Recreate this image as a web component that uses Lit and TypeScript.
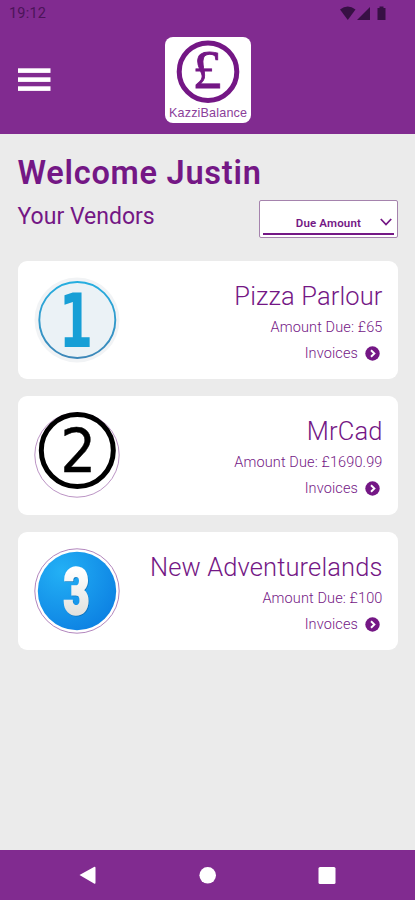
import { LitElement, html, svg, css } from "lit";
import { customElement, property } from "lit/decorators.js";

@customElement("vendor-badge")
class VendorBadge extends LitElement {
  @property({ type: Number }) rank = 1;
  static styles = css`
    :host { display: block; width: 86px; height: 86px; }
    svg { display: block; }
    .slab { font: 700 74px "DejaVu Sans", sans-serif; }
    .plain { font: 400 60px "DejaVu Sans", sans-serif; }
    .heavy { font: 900 64px Roboto, sans-serif; }
  `;
  private art() {
    if (this.rank === 1) {
      return svg`
        <defs><linearGradient id="b" x1="0" y1="0" x2="0" y2="1">
          <stop offset="0" stop-color="#25aee0"/><stop offset="1" stop-color="#3d87b8"/></linearGradient></defs>
        <circle cx="43" cy="43" r="42.5" fill="#f1f3f5"/>
        <circle cx="43.3" cy="43" r="38" fill="#ebf2f6" stroke="url(#b)" stroke-width="1.9"/>
        <text class="slab" x="42" y="69.5" text-anchor="middle" textLength="34" lengthAdjust="spacingAndGlyphs" fill="#179fd6">1</text>`;
    }
    if (this.rank === 2) {
      return svg`
        <circle cx="43" cy="43" r="42.2" fill="#fff" stroke="#a978b5" stroke-width="0.8"/>
        <circle cx="43.3" cy="38.5" r="36" fill="#fff" stroke="#000" stroke-width="5"/>
        <text class="plain" x="44.3" y="60.3" text-anchor="middle" textLength="36" lengthAdjust="spacingAndGlyphs" fill="#000" stroke="#000" stroke-width="0.4">2</text>`;
    }
    return svg`
      <defs>
        <radialGradient id="b" cx="0.3" cy="0.25" r="0.85">
          <stop offset="0" stop-color="#23b0f5"/><stop offset="1" stop-color="#0c80e2"/></radialGradient>
        <linearGradient id="n" x1="0" y1="0" x2="0" y2="1">
          <stop offset="0.2" stop-color="#fff"/><stop offset="0.9" stop-color="#dcdcd8"/></linearGradient>
      </defs>
      <circle cx="43" cy="43" r="42.2" fill="#fff" stroke="#a978b5" stroke-width="0.9"/>
      <circle cx="43" cy="43" r="39.2" fill="url(#b)"/>
      <text class="heavy" x="43.2" y="67" text-anchor="middle" textLength="26" lengthAdjust="spacingAndGlyphs" fill="#0868ad" stroke="#0868ad" stroke-width="2" opacity="0.7">3</text>
      <text class="heavy" x="42.4" y="66" text-anchor="middle" textLength="26" lengthAdjust="spacingAndGlyphs" fill="url(#n)" stroke="url(#n)" stroke-width="2.4">3</text>`;
  }
  render() {
    return html`<svg width="86" height="86" viewBox="0 0 86 86">${this.art()}</svg>`;
  }
}

@customElement("vendor-card")
class VendorCard extends LitElement {
  @property({ type: Number }) rank = 1;
  @property() name = "";
  @property() due = "";
  static styles = css`
    :host { display: flex; justify-content: space-between; box-sizing: border-box; height: 118.5px;
      padding: 16px 15.5px 0 16px; background: #fff; border-radius: 9px; color: #741785; }
    .info { display: flex; flex-direction: column; align-items: flex-end; white-space: nowrap; }
    .name { font-size: 25.5px; line-height: 30px; margin-top: 4px; letter-spacing: 0.12px; font-weight: 300; }
    .due { font-size: 14.5px; line-height: 18px; margin-top: 8px; font-weight: 300; letter-spacing: 0.12px; }
    .link { display: flex; align-items: center; gap: 7px; margin: 8px 2.5px 0 0; font-size: 14.5px; line-height: 18px; font-weight: 300; letter-spacing: 0.12px; }
    .link svg { margin-top: -1px; }
  `;
  render() {
    return html`
      <vendor-badge .rank=${this.rank}></vendor-badge>
      <div class="info">
        <div class="name">${this.name}</div>
        <div class="due">Amount Due: ${this.due}</div>
        <div class="link"><span>Invoices</span>
          <svg width="15" height="15" viewBox="0 0 15 15"><circle cx="7.5" cy="7.5" r="7.2" fill="#741785"/>
            <path d="M6 4.2 9.4 7.5 6 10.8" fill="none" stroke="#fff" stroke-width="1.9"/></svg>
        </div>
      </div>`;
  }
}

@customElement("app-root")
class AppRoot extends LitElement {
  static styles = css`
    :host { display: flex; flex-direction: column; width: 100%; height: 900px; overflow: hidden;
      background: #ebebeb; font-family: Roboto, sans-serif; color: #741785; }
    header { height: 133.5px; flex: none; background: #812b90; display: flex; flex-direction: column; }
    .status { height: 28px; display: flex; justify-content: space-between; padding: 0 28px 0 9px; color: #4c1459; }
    .time { font-size: 14.5px; line-height: 28px; letter-spacing: 0.2px; }
    .bar { display: grid; grid-template-columns: 1fr 86px 1fr; padding: 9px 18px 0; }
    .burger { margin-top: 31px; }
    .logo { display: block; }
    .brand { font: 12.6px "Liberation Sans", sans-serif; }
    .pound { font: 55px "Liberation Serif", serif; }
    main { flex: 1; padding: 20px 17px 0 17.5px; }
    h1 { margin: 0; font-size: 32.5px; line-height: 38px; font-weight: 600; letter-spacing: 0.75px; }
    .sub { display: flex; justify-content: space-between; height: 46px; margin-top: 8px; }
    h2 { margin: 0; font-size: 23px; line-height: 32px; margin-top: 1.5px; font-weight: 400; letter-spacing: 0; }
    .select { box-sizing: border-box; width: 139px; height: 38px; border: 1px solid #a583ad; border-radius: 2px;
      background: #fff; padding: 0 3px; }
    .value { height: 34px; box-sizing: border-box; border-bottom: 2px solid #741785; display: flex;
      justify-content: flex-end; align-items: flex-end; gap: 19px; padding: 0 2px 3px 0; }
    .value span { font-size: 11.5px; line-height: 14px; font-weight: 600; letter-spacing: 0.15px; }
    .value svg { margin-bottom: 4px; }
    .cards { display: flex; flex-direction: column; gap: 17px; margin-top: 15px; }
    nav { height: 50px; flex: none; background: #812b90; }
    nav svg, .status svg { display: block; }
  `;
  render() {
    const vendors = [
      { name: "Pizza Parlour", due: "£65" },
      { name: "MrCad", due: "£1690.99" },
      { name: "New Adventurelands", due: "£100" },
    ];
    return html`
      <header>
        <div class="status">
          <span class="time">19:12</span>
          <svg width="47" height="28" viewBox="0 0 47 28" fill="#371044">
            <path d="M0 9.5Q7.8 3.5 15.5 9.5L7.8 20Z"/><path d="M17 20 30 7V20Z"/>
            <path d="M37.5 8h2V6.5h4V8h2v12h-8Z"/></svg>
        </div>
        <div class="bar">
          <svg class="burger" width="33" height="24" fill="#fff">
            <rect y="0.3" width="32.5" height="4.6"/><rect y="9.3" width="32.5" height="4.6"/><rect y="18.3" width="32.5" height="4.6"/></svg>
          <svg class="logo" width="86" height="86" viewBox="0 0 86 86">
            <rect width="86" height="86" rx="8" fill="#fff"/>
            <circle cx="43" cy="34.7" r="28.8" fill="none" stroke="#741785" stroke-width="5"/>
            <text class="pound" x="42" y="51" text-anchor="middle" textLength="29" lengthAdjust="spacingAndGlyphs" fill="#741785" stroke="#741785" stroke-width="0.8">£</text>
            <text class="brand" x="4" y="79.8" textLength="78" fill="#8b409a">KazziBalance</text></svg>
          <span></span>
        </div>
      </header>
      <main>
        <h1>Welcome Justin</h1>
        <div class="sub">
          <h2>Your Vendors</h2>
          <div class="select"><div class="value"><span>Due Amount</span>
            <svg width="12" height="8" viewBox="0 0 12 8"><path d="M.8 1 6 6.5 11.2 1" fill="none" stroke="#741785" stroke-width="1.8"/></svg>
          </div></div>
        </div>
        <div class="cards">
          ${vendors.map((v, i) => html`<vendor-card .rank=${i + 1} .name=${v.name} .due=${v.due}></vendor-card>`)}
        </div>
      </main>
      <nav>
        <svg width="415" height="50" fill="#fff">
          <path d="M79.5 25 94 17Q95.5 16.3 95.5 18V32.5Q95.5 34.5 94 33.5Z"/>
          <circle cx="207.7" cy="25.3" r="8.3"/><rect x="318.5" y="17" width="17" height="17" rx="1.5"/></svg>
      </nav>`;
  }
}
